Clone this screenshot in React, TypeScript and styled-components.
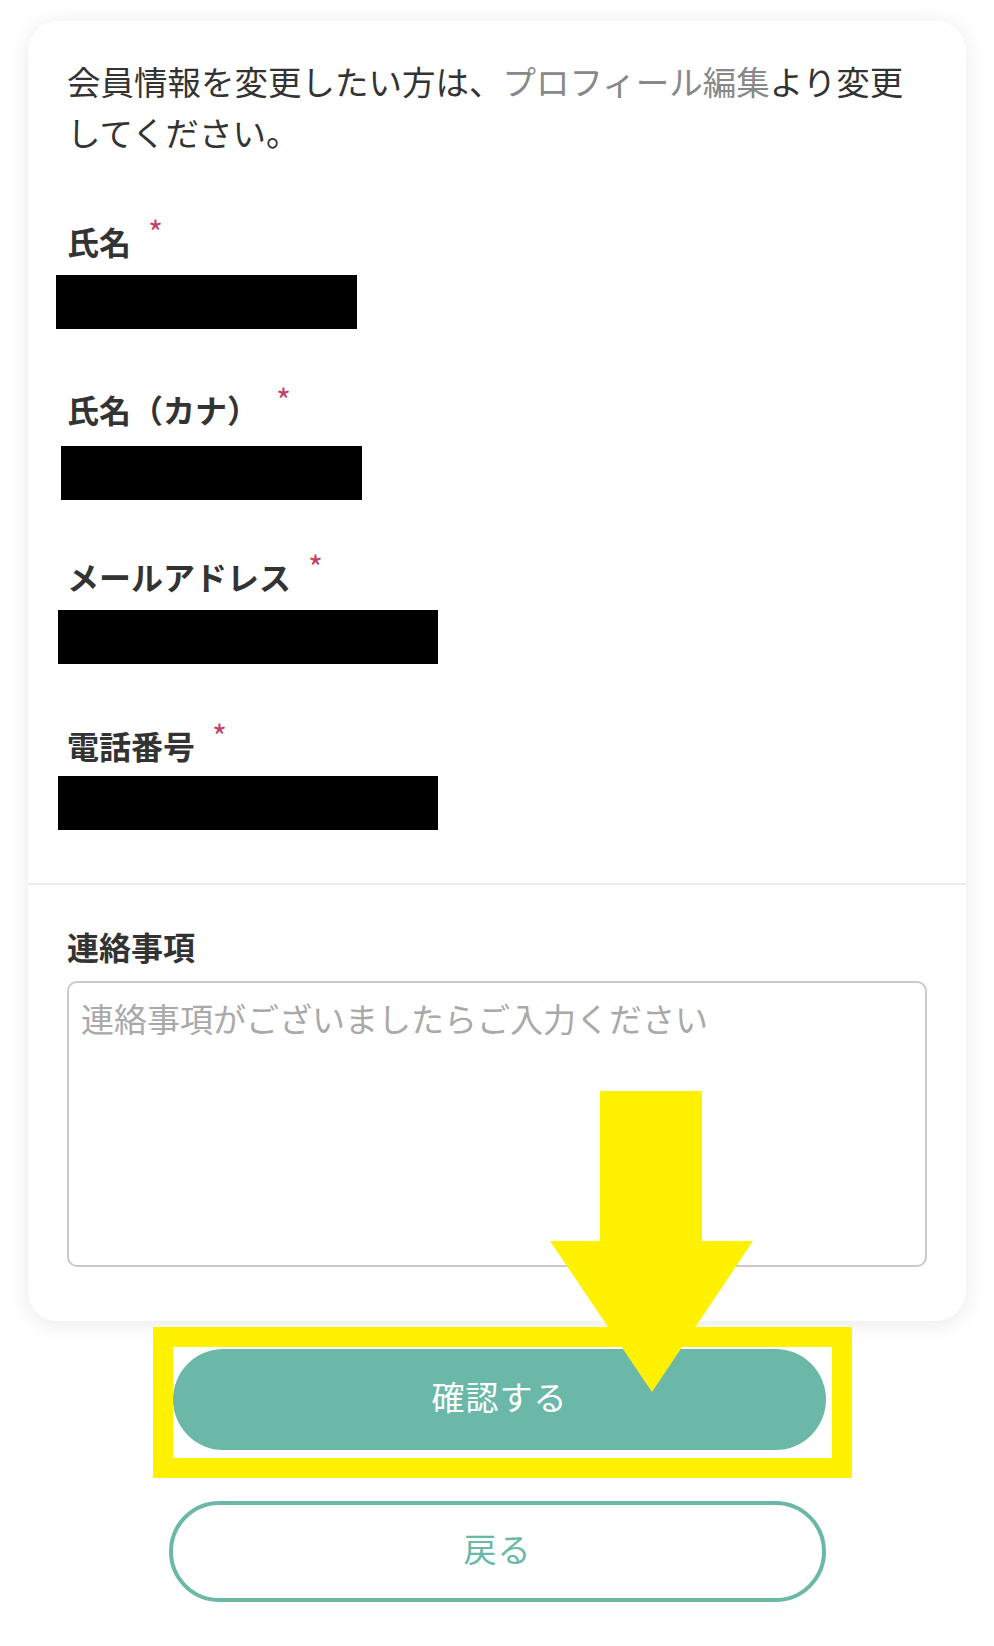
import { FunctionComponent } from "react";
import styled, { createGlobalStyle } from "styled-components";

const GREEN = "#6bb8a8";
const TEXT = "#333333";
const YELLOW = "#fff100";

const GlobalStyle = createGlobalStyle`
  html, body {
    margin: 0;
    padding: 0;
    background: #ffffff;
  }
  body {
    font-family: "Noto Sans CJK JP", "Noto Sans", sans-serif;
    color: ${TEXT};
  }
  * {
    box-sizing: border-box;
  }
`;

interface Field {
  label: string;
  boxWidth: number;
  boxOffset: number;
  boxGap: number;
  gapBefore: number;
}

const fields: Field[] = [
  { label: "氏名", boxWidth: 301, boxOffset: -11, boxGap: 12, gapBefore: 62 },
  { label: "氏名（カナ）", boxWidth: 301, boxOffset: -6, boxGap: 15, gapBefore: 58 },
  { label: "メールアドレス", boxWidth: 380, boxOffset: -9, boxGap: 12, gapBefore: 54 },
  { label: "電話番号", boxWidth: 380, boxOffset: -9, boxGap: 9, gapBefore: 59 },
];

const App: FunctionComponent = () => {
  return (
    <Page>
      <GlobalStyle />
      <Card>
        <TopSection>
          <Intro>
            会員情報を変更したい方は、<Link>プロフィール編集</Link>より変更してください。
          </Intro>
          {fields.map((f) => (
            <FieldGroup key={f.label} gapBefore={f.gapBefore}>
              <Label>
                {f.label}
                <Required>*</Required>
              </Label>
              <Redacted
                boxWidth={f.boxWidth}
                boxOffset={f.boxOffset}
                boxGap={f.boxGap}
              />
            </FieldGroup>
          ))}
        </TopSection>
        <BottomSection>
          <Label>連絡事項</Label>
          <Notes placeholder="連絡事項がございましたらご入力ください" />
        </BottomSection>
      </Card>

      <Highlight>
        <PrimaryButton>確認する</PrimaryButton>
      </Highlight>
      <SecondaryButton>戻る</SecondaryButton>

      <Arrow width="203" height="301" viewBox="0 0 203 301">
        <polygon
          points="50,0 152,0 152,150 203,150 102,301 0,150 50,150"
          fill={YELLOW}
        />
      </Arrow>
    </Page>
  );
};

interface StylesProps {
  gapBefore?: number;
  boxWidth?: number;
  boxOffset?: number;
  boxGap?: number;
}

const Page = styled.div`
  position: relative;
  width: 994px;
  min-height: 1646px;
  padding-top: 21px;
  overflow: hidden;
`;

const Card = styled.div`
  margin: 0 28px;
  background: #ffffff;
  border-radius: 30px;
  box-shadow: 0 3px 22px rgba(0, 0, 0, 0.09);
`;

const TopSection = styled.div`
  padding: 34px 39px 53px;
  border-bottom: 2px solid #ebebeb;
`;

const Intro = styled.p`
  margin: 0;
  font-size: 33.5px;
  line-height: 51px;
  color: ${TEXT};
`;

const Link = styled.span`
  color: #888888;
`;

const FieldGroup = styled.div<StylesProps>`
  display: flex;
  flex-direction: column;
  margin-top: ${(p) => p.gapBefore}px;
`;

const Label = styled.div`
  display: flex;
  align-items: flex-start;
  font-size: 32px;
  line-height: 44px;
  font-weight: 700;
  color: ${TEXT};
`;

const Required = styled.span`
  margin-left: 17px;
  margin-top: -4px;
  font-size: 32px;
  line-height: 32px;
  font-weight: 400;
  color: #c2426a;
`;

const Redacted = styled.div<StylesProps>`
  width: ${(p) => p.boxWidth}px;
  height: 54px;
  margin-top: ${(p) => p.boxGap}px;
  margin-left: ${(p) => p.boxOffset}px;
  background: #000000;
`;

const BottomSection = styled.div`
  padding: 39px 39px 54px;
  display: flex;
  flex-direction: column;
`;

const Notes = styled.textarea`
  margin-top: 13px;
  width: 100%;
  height: 286px;
  padding: 10px 12px;
  border: 2px solid #cacaca;
  border-radius: 10px;
  resize: none;
  font-family: "Noto Sans CJK JP", "Noto Sans", sans-serif;
  font-size: 33px;
  line-height: 50px;
  color: ${TEXT};
  background: #ffffff;
  outline: none;
  &::placeholder {
    color: #a9a9a9;
  }
`;

const Highlight = styled.div`
  width: 699px;
  margin: 6px 0 0 153px;
  padding: 2px 6px 8px 0;
  border: 20px solid ${YELLOW};
`;

const ButtonBase = styled.button`
  display: flex;
  align-items: center;
  justify-content: center;
  height: 101px;
  padding: 0 0 7px;
  border-radius: 51px;
  font-family: "Noto Sans CJK JP", "Noto Sans", sans-serif;
  font-size: 33px;
  letter-spacing: 1px;
  cursor: pointer;
`;

const PrimaryButton = styled(ButtonBase)`
  width: 653px;
  border: none;
  background: ${GREEN};
  color: #ffffff;
`;

const SecondaryButton = styled(ButtonBase)`
  width: 657px;
  margin: 23px 0 0 169px;
  border: 4px solid ${GREEN};
  background: #ffffff;
  color: ${GREEN};
`;

const Arrow = styled.svg`
  position: absolute;
  left: 550px;
  top: 1091px;
  pointer-events: none;
`;

export default App;
